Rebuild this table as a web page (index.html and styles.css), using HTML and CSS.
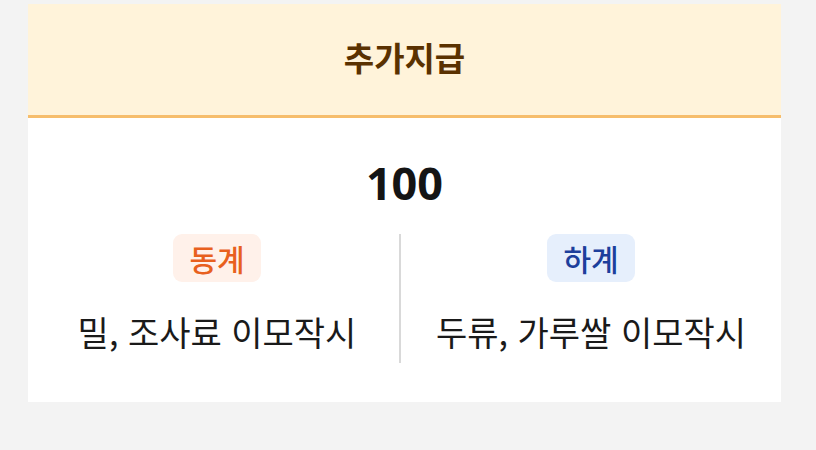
FILE: index.html
```html
<!DOCTYPE html>
<html lang="ko">
<head>
<meta charset="utf-8">
<link rel="stylesheet" href="styles.css">
</head>
<body>
<div class="card">
  <div class="card-header"><span class="title">추가지급</span></div>
  <div class="card-body">
    <div class="amount">100</div>
    <div class="columns">
      <div class="col col-left">
        <span class="badge badge-winter">동계</span>
        <div class="desc">밀, 조사료 이모작시</div>
      </div>
      <div class="divider"></div>
      <div class="col">
        <span class="badge badge-summer">하계</span>
        <div class="desc">두류, 가루쌀 이모작시</div>
      </div>
    </div>
  </div>
</div>
</body>
</html>
```
FILE: styles.css
```css
html, body {
  margin: 0;
  padding: 0;
  background: #f3f3f3;
}
body {
  padding: 4px 35px 0 28px;
  font-family: "Noto Sans CJK KR", "Noto Sans", sans-serif;
}
.card {
  background: #ffffff;
  height: 398px;
}
.card-header {
  background: #fff3da;
  height: 111px;
  border-bottom: 3px solid #f6bd6c;
  display: flex;
  align-items: center;
  justify-content: center;
}
.title {
  font-size: 33px;
  font-weight: 700;
  color: #5a3100;
  line-height: 40px;
  margin-top: -5px;
}
.card-body {
  padding-top: 40px;
}
.amount {
  text-align: center;
  font-family: "Noto Sans", sans-serif;
  font-size: 45px;
  font-weight: 700;
  color: #141414;
  line-height: 50px;
}
.columns {
  display: grid;
  grid-template-columns: 371px 2px 1fr;
  margin-top: 26px;
}
.col {
  display: flex;
  flex-direction: column;
  align-items: center;
}
.col-left {
  padding-left: 7px;
}
.divider {
  background: #d9d9d9;
  width: 2px;
  height: 129px;
}
.badge {
  display: inline-block;
  height: 48px;
  line-height: 48px;
  padding: 0 16px;
  border-radius: 9px;
  font-size: 30px;
  font-weight: 500;
}
.badge-winter {
  background: #fff1ea;
  color: #e8601e;
}
.badge-summer {
  background: #e6effc;
  color: #1d3f9c;
}
.desc {
  margin-top: 28px;
  font-size: 34px;
  color: #1a1a1a;
  line-height: 44px;
}
```
